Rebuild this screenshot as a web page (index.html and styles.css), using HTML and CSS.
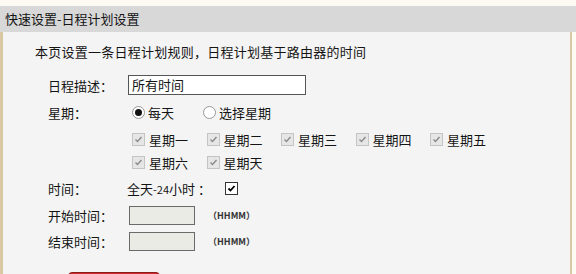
FILE: index.html
```html
<!DOCTYPE html>
<html lang="zh-CN">

<head>
    <meta charset="UTF-8">
    <title>快速设置-日程计划设置</title>
    <link rel="stylesheet" href="styles.css">
</head>

<body>
    <div class="panel">
        <div class="panel-title">快速设置-日程计划设置</div>
        <div class="panel-body">
            <p class="intro">本页设置一条日程计划规则，日程计划基于路由器的时间</p>

            <div class="form">
                <div class="row row-desc">
                    <label class="label">日程描述：</label>
                    <div class="text-input">所有时间</div>
                </div>

                <div class="row row-week">
                    <label class="label">星期：</label>
                    <span class="radio checked"></span><span class="radio-text">每天</span>
                    <span class="radio second"></span><span class="radio-text">选择星期</span>
                </div>

                <div class="days">
                    <div class="day"><span class="check disabled"><svg viewBox="0 0 11 11"><path d="M2.5 5.5 L4.5 7.5 L8.5 3"/></svg></span>星期一</div>
                    <div class="day"><span class="check disabled"><svg viewBox="0 0 11 11"><path d="M2.5 5.5 L4.5 7.5 L8.5 3"/></svg></span>星期二</div>
                    <div class="day"><span class="check disabled"><svg viewBox="0 0 11 11"><path d="M2.5 5.5 L4.5 7.5 L8.5 3"/></svg></span>星期三</div>
                    <div class="day"><span class="check disabled"><svg viewBox="0 0 11 11"><path d="M2.5 5.5 L4.5 7.5 L8.5 3"/></svg></span>星期四</div>
                    <div class="day"><span class="check disabled"><svg viewBox="0 0 11 11"><path d="M2.5 5.5 L4.5 7.5 L8.5 3"/></svg></span>星期五</div>
                    <div class="day"><span class="check disabled"><svg viewBox="0 0 11 11"><path d="M2.5 5.5 L4.5 7.5 L8.5 3"/></svg></span>星期六</div>
                    <div class="day"><span class="check disabled"><svg viewBox="0 0 11 11"><path d="M2.5 5.5 L4.5 7.5 L8.5 3"/></svg></span>星期天</div>
                </div>

                <div class="row row-time">
                    <label class="label">时间：</label>
                    <span class="allday">全天<span class="small">-24</span>小时 ：</span>
                    <span class="check"><svg viewBox="0 0 11 11"><path d="M2.5 5.5 L4.5 7.5 L8.5 3"/></svg></span>
                </div>

                <div class="row row-hour">
                    <label class="label">开始时间：</label>
                    <div class="time-input"></div>
                    <span class="hint">（HHMM）</span>
                </div>

                <div class="row row-hour">
                    <label class="label">结束时间：</label>
                    <div class="time-input"></div>
                    <span class="hint">（HHMM）</span>
                </div>

                <!-- save button, only its top edge is in view -->
                <button class="save-btn" title="保存"></button>
            </div>
        </div>
    </div>
</body>

</html>
```

FILE: styles.css
```css
body {
    margin: 0;
    padding-top: 6px;
    background-color: #fdfbf4;
    font-family: "Noto Sans CJK SC", "Noto Sans", sans-serif;
    font-size: 13px;
    color: #141414;
    overflow: hidden;
}

.panel {
    width: 576px;
}

.panel-title {
    height: 26px;
    line-height: 26px;
    padding-left: 5px;
    background-color: #d8d8d8;
}

.panel-body {
    width: 567px;
    height: 300px;
    background-color: #f4f4f4;
    border-left: 3px solid #d8c8a4;
    border-right: 2px solid #d8c8a4;
}

.intro {
    margin: 0;
    padding: 10px 0 0 32px;
    height: 20px;
    line-height: 20px;
    letter-spacing: 0.25px;
}

.form {
    padding-left: 45px;
    padding-top: 11px;
}

.row {
    display: flex;
    align-items: center;
}

.label {
    width: 80px;
    flex-shrink: 0;
}

.row-desc {
    height: 24px;
}

.text-input {
    width: 173px;
    height: 18px;
    line-height: 18px;
    padding-left: 3px;
    background: #fff;
    border: 1px solid #555;
}

.row-week {
    height: 31px;
}

.radio {
    width: 11px;
    height: 11px;
    border: 1px solid #999;
    border-radius: 50%;
    background: #fff;
    margin-left: 4px;
    margin-right: 3px;
    position: relative;
}

.radio.checked::after {
    content: "";
    position: absolute;
    left: 2px;
    top: 2px;
    width: 7px;
    height: 7px;
    border-radius: 50%;
    background: #111;
}

.radio.second {
    margin-left: 29px;
}

.days {
    display: grid;
    grid-template-columns: repeat(5, 74.5px);
    grid-auto-rows: 23px;
    padding-left: 84px;
}

.day {
    display: flex;
    align-items: center;
}

.check {
    width: 11px;
    height: 11px;
    border: 1px solid #333;
    background: #fff;
    margin-right: 4px;
    display: flex;
}

.check svg {
    width: 11px;
    height: 11px;
    fill: none;
    stroke: #000;
    stroke-width: 1.8;
}

.check.disabled {
    border-color: #c4c4c4;
    background: #e6e6e6;
}

.check.disabled svg {
    stroke: #8a8a8a;
    stroke-width: 1.4;
}

.row-time {
    height: 28px;
}

.allday {
    margin-left: -1px;
    margin-right: 14px;
}

.small {
    font-size: 11px;
}

.row-hour {
    height: 26px;
}

.time-input {
    width: 64px;
    height: 17px;
    margin-left: 1px;
    background: #ebebe5;
    border: 1px solid #6a6a6a;
}

.hint {
    margin-left: 13px;
    font-size: 9px;
    font-weight: bold;
    color: #333;
}

.save-btn {
    display: block;
    margin: 18px 0 0 20px;
    width: 92px;
    height: 28px;
    padding: 0;
    background-color: #cc2a2c;
    border: 1px solid #8e1c1c;
    border-radius: 4px;
}
```
